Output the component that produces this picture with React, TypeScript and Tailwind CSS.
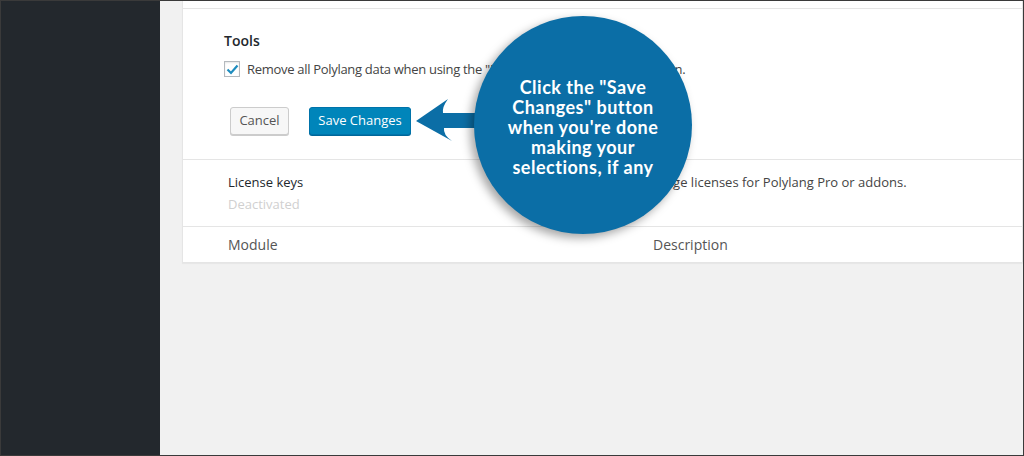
const font = { fontFamily: '"Open Sans", "Noto Sans", sans-serif' };
const calloutFont = { fontFamily: 'Lato, "Open Sans", sans-serif' };

const Callout = () => (
  <>
    <svg
      className="absolute left-[414px] top-[96px]"
      width="70"
      height="46"
      viewBox="0 0 70 46"
    >
      <path
        d="M2 24 L34 2 Q28 10 29 16 L70 16 L70 31 L30 31 Q29 38 38 44 Z"
        fill="#0b6ea6"
      />
    </svg>
    <div className="absolute left-[474px] top-[15px] w-[218px] h-[218px] rounded-full bg-[#0b6ea6] shadow-[-4px_4px_10px_rgba(0,0,0,0.35)] flex items-center justify-center text-center">
      <p
        className="text-white font-bold text-[18px] leading-[20px] tracking-[0.5px] px-5 mt-[4px]"
        style={calloutFont}
      >
        Click the "Save Changes" button when you're done making your selections, if any
      </p>
    </div>
  </>
);

export default function App() {
  return (
    <div className="w-[1024px] h-[456px] border border-[#3a3a3a] flex overflow-hidden" style={font}>
      <div className="w-[159px] bg-[#23282d]" />
      <div className="relative flex-1 bg-[#f1f1f1] pl-[22px] pr-0">
        <div className="bg-white border-x border-b border-[#e5e5e5] shadow-[0_1px_1px_rgba(0,0,0,0.04)]">
          <div className="h-[8px] border-b border-[#e5e5e5]" />
          <div className="h-[151px] border-b border-[#e5e5e5] pl-[41px] pt-[22px]">
            <h3 className="text-[14px] font-semibold text-[#23282d] leading-[20px]">Tools</h3>
            <label className="flex items-center gap-[7px] mt-[9px] text-[13px] text-[#444] leading-[18px]">
              <span className="w-[16px] h-[16px] border border-[#b4b9be] bg-white flex items-center justify-center shadow-[inset_0_1px_2px_rgba(0,0,0,0.1)]">
                <svg width="13" height="11" viewBox="0 0 13 11">
                  <path d="M1.5 5.5 L5 9 L11.5 1.5" fill="none" stroke="#1e8cbe" strokeWidth="2.2" />
                </svg>
              </span>
              <span className="tracking-[-0.3px]">
                Remove all Polylang data when using the "Delete" link on the plugins screen.
              </span>
            </label>
            <div className="flex gap-[20px] mt-[29px] ml-[6px]">
              <button className="h-[28px] w-[59px] border border-[#ccc] bg-[#f7f7f7] rounded-[3px] text-[13px] text-[#555] shadow-[0_1px_0_#ccc]">
                Cancel
              </button>
              <button className="h-[28px] w-[102px] border border-[#0073aa] bg-[#0085ba] rounded-[3px] text-[13px] text-white shadow-[0_1px_0_#006799]">
                Save Changes
              </button>
            </div>
          </div>
          <div className="h-[67px] border-b border-[#e5e5e5] flex text-[13px]">
            <div className="w-[428px] pl-[45px] pt-[12px]">
              <div className="text-[#23282d] leading-[20px]">License keys</div>
              <div className="text-[#d0d0d0] leading-[20px] mt-[2px]">Deactivated</div>
            </div>
            <div className="pt-[12px] pl-[28px] text-[#444] leading-[20px]">
              Manage licenses for Polylang Pro or addons.
            </div>
          </div>
          <div className="h-[35px] flex items-center text-[14px] text-[#555]">
            <div className="w-[470px] pl-[45px]">Module</div>
            <div>Description</div>
          </div>
        </div>
        <div className="absolute left-[-160px] top-0">
          <Callout />
        </div>
      </div>
    </div>
  );
}
